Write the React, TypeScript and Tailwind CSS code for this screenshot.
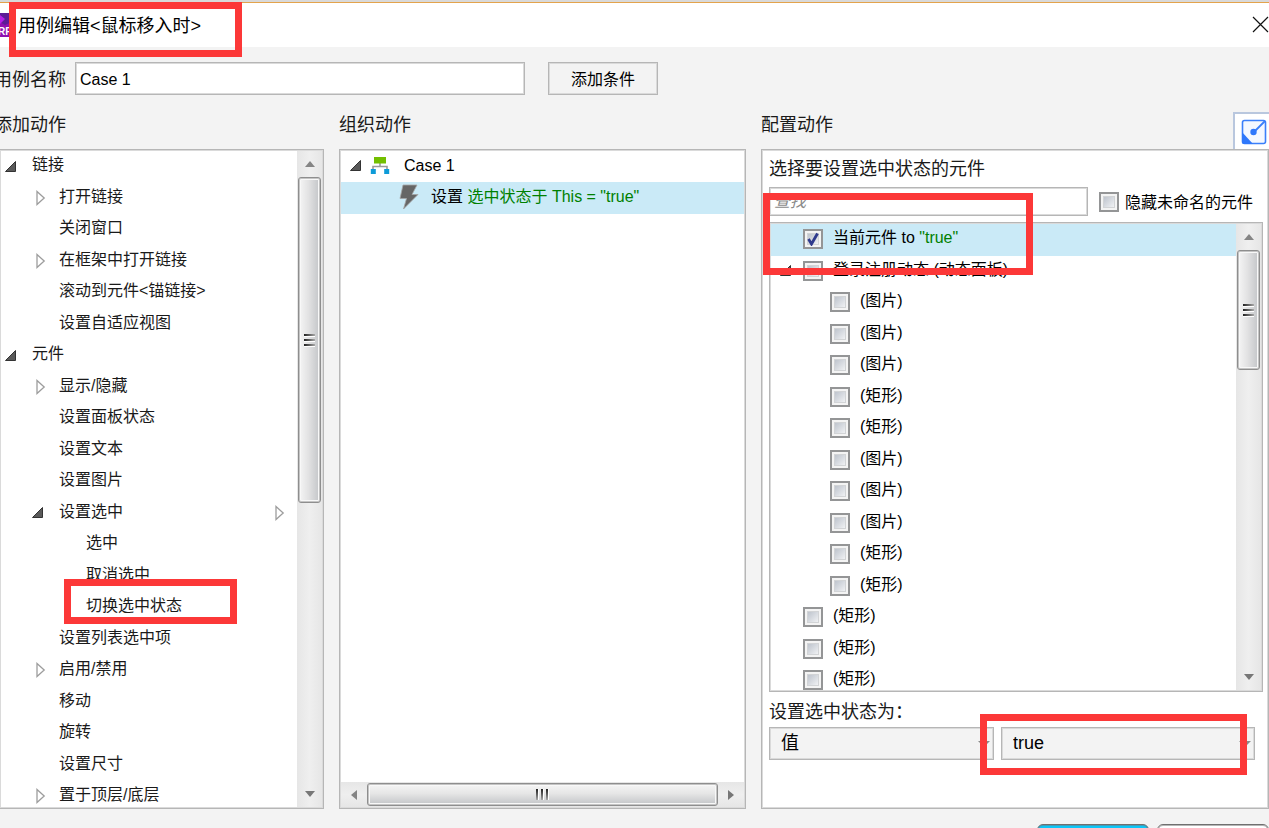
import { useState, type ReactNode } from 'react'
import clsx from 'clsx'

type Arrow = 'open' | 'closed'

interface ActionItem {
  label: string
  level: 0 | 1 | 2
  arrow?: Arrow
  more?: boolean
}

interface WidgetItem {
  id: number
  label: string
  level: 0 | 1
  arrow?: Arrow
  value?: string
}

const ACTIONS: ActionItem[] = [
  { label: '链接', level: 0, arrow: 'open' },
  { label: '打开链接', level: 1, arrow: 'closed' },
  { label: '关闭窗口', level: 1 },
  { label: '在框架中打开链接', level: 1, arrow: 'closed' },
  { label: '滚动到元件<锚链接>', level: 1 },
  { label: '设置自适应视图', level: 1 },
  { label: '元件', level: 0, arrow: 'open' },
  { label: '显示/隐藏', level: 1, arrow: 'closed' },
  { label: '设置面板状态', level: 1 },
  { label: '设置文本', level: 1 },
  { label: '设置图片', level: 1 },
  { label: '设置选中', level: 1, arrow: 'open', more: true },
  { label: '选中', level: 2 },
  { label: '取消选中', level: 2 },
  { label: '切换选中状态', level: 2 },
  { label: '设置列表选中项', level: 1 },
  { label: '启用/禁用', level: 1, arrow: 'closed' },
  { label: '移动', level: 1 },
  { label: '旋转', level: 1 },
  { label: '设置尺寸', level: 1 },
  { label: '置于顶层/底层', level: 1, arrow: 'closed' },
]

const CHILDREN = ['图片', '图片', '图片', '矩形', '矩形', '图片', '图片', '图片', '矩形', '矩形']

const WIDGETS: WidgetItem[] = [
  { id: 0, label: '当前元件', level: 0, value: '"true"' },
  { id: 1, label: '登录注册动态 (动态面板)', level: 0, arrow: 'open' },
  ...CHILDREN.map((name, i): WidgetItem => ({ id: i + 2, label: `(${name})`, level: 1 })),
  { id: 12, label: '(矩形)', level: 0 },
  { id: 13, label: '(矩形)', level: 0 },
  { id: 14, label: '(矩形)', level: 0 },
]

const ACTION_INDENT = { 0: 'pl-1', 1: 'pl-[31px]', 2: 'pl-[58px]' }
const WIDGET_INDENT = { 0: 'pl-2', 1: 'pl-[35px]' }

const ROW = 'flex shrink-0 items-center pb-0.5 whitespace-nowrap odd:h-8 even:h-[31px]'
const FRAME = 'border border-[#b6b6b6] p-px shadow-[inset_0_0_0_1px_#dadada]'
const FIELD = 'border border-[#b6b6b6] shadow-[inset_0_0_0_1px_#dadada]'

function TreeArrow({ kind }: { kind?: Arrow }) {
  if (kind === 'open') {
    return (
      <svg width="13" height="13" viewBox="0 0 13 13" aria-hidden="true">
        <path d="M11.5 1.5V11.5H1.5Z" fill="#5a5a5a" stroke="#333" />
      </svg>
    )
  }
  if (kind === 'closed') {
    return (
      <svg width="15" height="16" viewBox="0 0 15 16" aria-hidden="true">
        <path d="M6 1.5V14.5L13.2 8Z" fill="#fff" stroke="#9d9d9d" strokeWidth="1.3" />
      </svg>
    )
  }
  return null
}

function ScrollBar({ horizontal, size }: { horizontal?: boolean; size: string }) {
  return (
    <div
      className={clsx(
        'flex shrink-0 from-[#e6e6e6] via-[#efefef] to-[#e6e6e6]',
        horizontal ? 'h-[25px] bg-linear-to-b' : 'w-[25px] flex-col bg-linear-to-r',
      )}
    >
      <span className="flex size-[26px] shrink-0 items-center justify-center">
        <svg width="10" height="10" viewBox="0 0 10 10" aria-hidden="true">
          <path d={horizontal ? 'M8 0V10L2 5Z' : 'M0 8H10L5 2Z'} fill="#858585" />
        </svg>
      </span>
      <div className="min-h-0 min-w-0 flex-1">
        <div
          className={clsx(
            'flex items-center justify-center gap-[2px] rounded-[3px] border border-[#8e8e8e] from-[#f6f6f6] from-0% to-[#c2c4c7] shadow-[inset_0_0_0_1px_#c4c4c4,inset_0_0_0_2px_#f8f8f8]',
            horizontal
              ? 'mt-px h-[23px] bg-linear-to-b via-[#e6e6e6] via-45%'
              : 'mx-px flex-col bg-linear-to-r via-[#e2e2e3] via-45%',
            size,
          )}
        >
          {[0, 1, 2].map((i) => (
            <span
              key={i}
              className={clsx(
                'from-[#222] to-[#aaa]',
                horizontal
                  ? 'h-[11px] w-[3px] border-r border-white bg-linear-to-b'
                  : 'h-[3px] w-[11px] border-b border-white bg-linear-to-r',
              )}
            />
          ))}
        </div>
      </div>
      <span className="flex size-[26px] shrink-0 items-center justify-center">
        <svg width="10" height="10" viewBox="0 0 10 10" aria-hidden="true">
          <path d={horizontal ? 'M2 0V10L8 5Z' : 'M0 2H10L5 8Z'} fill="#777" />
        </svg>
      </span>
    </div>
  )
}

function CheckBox({ id, checked, onChange }: { id: string; checked: boolean; onChange: () => void }) {
  return (
    <span className="grid size-5 shrink-0 place-items-center">
      <input
        id={id}
        type="checkbox"
        checked={checked}
        onChange={onChange}
        className="col-start-1 row-start-1 size-5 appearance-none border-2 border-[#949596] bg-linear-to-br from-[#b0b7c2] to-[#ffffff] shadow-[inset_0_0_0_2px_#f4f4f4,inset_0_0_0_3px_#d2d4d6]"
      />
      {checked && (
        <svg width="12" height="14" viewBox="0 0 12 14" className="pointer-events-none col-start-1 row-start-1" aria-hidden="true">
          <path d="M1.5 7L4.5 12L10.5 1.5" fill="none" stroke="#2f3a8c" strokeWidth="2.8" />
        </svg>
      )}
    </span>
  )
}

function DropDown({ label, value, className }: { label: string; value: string; className: string }) {
  return (
    <div className={clsx('grid items-center', className)}>
      <select
        aria-label={label}
        defaultValue={value}
        className={clsx(FIELD, 'col-start-1 row-start-1 h-[33px] w-full appearance-none bg-[#f3f3f3] px-[11px] pb-0.5 text-lg leading-6 text-black')}
      >
        <option>{value}</option>
      </select>
      <svg width="12" height="6" viewBox="0 0 12 6" className="pointer-events-none col-start-1 row-start-1 mr-1 justify-self-end" aria-hidden="true">
        <path d="M0 0H12L6 6Z" fill="#8a8a8a" />
      </svg>
    </div>
  )
}

function Column({ title, titleClass, extra, children }: { title: string; titleClass?: string; extra?: ReactNode; children: ReactNode }) {
  return (
    <section className="flex min-h-0 min-w-0 flex-col">
      <div className="flex h-[54px] shrink-0 items-end justify-between">
        <h2 className={clsx('pb-3 text-lg leading-6', titleClass)}>{title}</h2>
        {extra}
      </div>
      {children}
    </section>
  )
}

function CaseIcon() {
  return (
    <svg width="20" height="19" viewBox="0 0 20 19" aria-hidden="true">
      <path d="M10 7V10.5M3 14V10.5H17V14" fill="none" stroke="#9a9a9a" strokeWidth="1.6" />
      <rect x="4" y="1" width="12" height="6.5" fill="#73bf00" />
      <rect x="0.8" y="13" width="5" height="5" fill="#0d9bd8" />
      <rect x="14.2" y="13" width="5" height="5" fill="#0d9bd8" />
    </svg>
  )
}

function BoltIcon() {
  return (
    <svg width="20" height="26" viewBox="0 0 20 26" aria-hidden="true">
      <path d="M4 1H18L13 10.5H19L4.5 25L7.5 14.5H1Z" fill="#666" stroke="#a5a5a5" strokeWidth="0.8" />
    </svg>
  )
}

function PinIcon() {
  return (
    <svg width="26" height="26" viewBox="0 0 26 26" aria-hidden="true">
      <rect x="1.5" y="1.5" width="23" height="23" rx="2" fill="#f4f8ff" stroke="#3a7ffa" strokeWidth="1.6" />
      <path d="M1 13L12 25H3Q1 25 1 23Z" fill="#2f78fb" />
      <path d="M13 13L24 2" stroke="#3a7ffa" strokeWidth="1.8" />
      <circle cx="12.5" cy="13" r="3.2" fill="#2f78fb" />
    </svg>
  )
}

function Marker({ className }: { className: string }) {
  return <div className={clsx('pointer-events-none absolute border-[7px] border-[#fc3838]', className)} />
}

export default function App() {
  const [checked, setChecked] = useState<number[]>([0])
  const [hideUnnamed, setHideUnnamed] = useState(false)

  const toggle = (id: number) =>
    setChecked((prev) => (prev.includes(id) ? prev.filter((x) => x !== id) : [...prev, id]))

  return (
    <div className="relative flex h-screen flex-col overflow-hidden bg-[#f3f3f3] font-['Liberation_Sans','Noto_Sans_CJK_SC',sans-serif] text-base text-[#1a1a1a]">
      {/* Title bar */}
      <header className="flex h-[47px] shrink-0 items-center border-t-2 border-[#d9d9d9] bg-white shadow-[inset_0_1px_0_#e3a34c]">
        <svg width="16" height="24" viewBox="0 0 16 24" aria-hidden="true">
          <rect width="16" height="24" fill="#8e12b0" />
          <path d="M0 0H16V7L5 12L0 9Z" fill="#5d1c96" />
          <path d="M0 2L5 6L0 11Z" fill="#b520e8" />
          <text x="-2" y="22" fontSize="10" fontWeight="bold" fill="#fff">RP</text>
        </svg>
        <h1 className="pt-0.5 pl-0.5 text-lg leading-6 text-black">用例编辑&lt;鼠标移入时&gt;</h1>
        <button type="button" aria-label="关闭" className="ml-auto">
          <svg width="17" height="17" viewBox="0 0 17 17" aria-hidden="true">
            <path d="M1 1L16 16M16 1L1 16" stroke="#111" strokeWidth="1.2" />
          </svg>
        </button>
      </header>

      {/* Case name */}
      <div className="flex shrink-0 items-center pt-[15px]">
        <label htmlFor="case-name" className="-ml-1.5 shrink-0 pt-0.5 text-lg leading-6">
          用例名称
        </label>
        <input
          id="case-name"
          defaultValue="Case 1"
          className={clsx(FIELD, 'ml-[9px] h-[33px] w-[450px] bg-white px-1 pt-0.5 text-base text-black')}
        />
        <button type="button" className={clsx(FIELD, 'ml-[23px] h-[33px] w-[110px] pt-0.5 text-base text-black')}>
          添加条件
        </button>
      </div>

      <main className="grid min-h-0 flex-1 grid-cols-[minmax(0,324fr)_minmax(0,407fr)_minmax(0,508fr)] grid-rows-[minmax(0,1fr)] gap-x-[15px]">
        <Column title="添加动作" titleClass="-ml-1.5">
          <div className={clsx(FRAME, 'flex min-h-0 flex-1 border-l-0 bg-white pl-0')}>
            <ul className="flex min-w-0 flex-1 flex-col overflow-hidden">
              {ACTIONS.map((item) => (
                <li key={item.label} className={clsx(ROW, ACTION_INDENT[item.level])}>
                  <span className="w-7 shrink-0">
                    <TreeArrow kind={item.arrow} />
                  </span>
                  <span className="pb-0.5">{item.label}</span>
                  {item.more && (
                    <span className="ml-auto pr-3">
                      <TreeArrow kind="closed" />
                    </span>
                  )}
                </li>
              ))}
            </ul>
            <ScrollBar size="h-[54%]" />
          </div>
        </Column>

        <Column title="组织动作">
          <div className={clsx(FRAME, 'flex min-h-0 flex-1 flex-col bg-white')}>
            <ul className="min-h-0 flex-1 text-black">
              <li className="flex h-[31px] items-center pb-0.5 pl-2">
                <span className="w-[21px] shrink-0">
                  <TreeArrow kind="open" />
                </span>
                <CaseIcon />
                <span className="pl-3.5">Case 1</span>
              </li>
              <li className="flex h-8 items-center bg-[#caeaf7] pb-0.5 pl-[58px]">
                <BoltIcon />
                <span className="pl-3">
                  设置 <span className="text-[#008000]">选中状态于 This = "true"</span>
                </span>
              </li>
            </ul>
            <ScrollBar horizontal size="w-full" />
          </div>
        </Column>

        <Column
          title="配置动作"
          extra={
            <button
              type="button"
              aria-label="定位"
              className="flex h-[37px] w-9 items-center justify-end border-2 border-r-0 border-b-0 border-[#b9c7de] bg-white pr-0.5"
            >
              <PinIcon />
            </button>
          }
        >
          <div className={clsx(FRAME, 'flex min-h-0 flex-1 flex-col bg-white pr-[5px] pl-[7px]')}>
            <h3 className="pt-1 text-lg leading-7">选择要设置选中状态的元件</h3>
            <div className="flex shrink-0 items-center pt-1 text-black">
              <input
                type="search"
                aria-label="查找"
                placeholder="查找"
                className={clsx(FIELD, 'h-[29px] w-[319px] min-w-0 px-1 text-base italic placeholder:text-[#8a8a8a]')}
              />
              <span className="flex items-center gap-1.5 pl-[11px] whitespace-nowrap">
                <CheckBox id="hide-unnamed" checked={hideUnnamed} onChange={() => setHideUnnamed(!hideUnnamed)} />
                <label htmlFor="hide-unnamed" className="pt-0.5">
                  隐藏未命名的元件
                </label>
              </span>
            </div>

            {/* Widget list */}
            <div className={clsx(FRAME, 'mt-1.5 flex min-h-0 flex-1 text-black')}>
              <ul className="flex min-w-0 flex-1 flex-col overflow-hidden">
                {WIDGETS.map((w) => (
                  <li key={w.id} className={clsx(ROW, WIDGET_INDENT[w.level], w.value && 'bg-[#caeaf7]')}>
                    <span className="w-6 shrink-0">
                      <TreeArrow kind={w.arrow} />
                    </span>
                    <CheckBox id={`widget-${w.id}`} checked={checked.includes(w.id)} onChange={() => toggle(w.id)} />
                    <label htmlFor={`widget-${w.id}`} className="pb-0.5 pl-2.5">
                      {w.label}
                      {w.value && (
                        <>
                          {' to '}
                          <span className="text-[#008000]">{w.value}</span>
                        </>
                      )}
                    </label>
                  </li>
                ))}
              </ul>
              <ScrollBar size="h-[29%]" />
            </div>

            <h3 className="pt-1.5 text-lg leading-7">设置选中状态为：</h3>
            <div className="flex shrink-0 gap-[7px] pt-px pr-2 pb-[47px]">
              <DropDown label="类型" value="值" className="flex-[225]" />
              <DropDown label="状态值" value="true" className="flex-[254]" />
            </div>
          </div>
        </Column>
      </main>

      <footer className="flex h-[19px] shrink-0 justify-end gap-2 overflow-hidden pt-[15px]">
        <button type="button" aria-label="确定" className="h-9 w-28 shrink-0 rounded-md border border-[#6f6f6f] bg-[#0cc6f8] shadow-[inset_0_0_0_1px_#3f9fba]" />
        <button type="button" aria-label="取消" className="h-9 w-28 shrink-0 rounded-md border border-[#6f6f6f] bg-white shadow-[inset_0_0_0_1px_#b5b5b5]" />
      </footer>

      {/* Highlight boxes over the dialog */}
      <Marker className="top-[2px] left-[9px] h-[55px] w-[233px]" />
      <Marker className="top-[193px] left-[763px] h-[82px] w-[270px]" />
      <Marker className="top-[579px] left-[64px] h-[45px] w-[173px]" />
      <Marker className="top-[714px] left-[980px] h-[61px] w-[267px]" />
    </div>
  )
}
